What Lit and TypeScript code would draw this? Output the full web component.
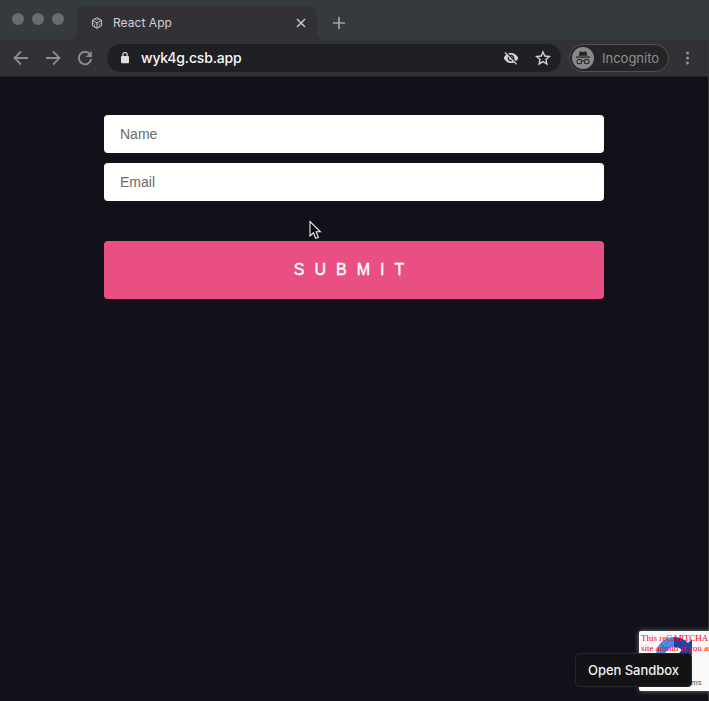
import { LitElement, html, css } from "lit";
import { customElement } from "lit/decorators.js";

@customElement("browser-tabs")
class BrowserTabs extends LitElement {
  static styles = css`
    :host { display: flex; height: 40px; background: #353a3d; font-family: Inter, "Liberation Sans", sans-serif; }
    .lights { display: flex; gap: 8px; padding: 13px 0 0 12px; width: 65px; box-sizing: border-box; }
    .lights i { width: 12px; height: 12px; border-radius: 50%; background: #696b6c; }
    .tab { position: relative; margin: 6px 0 0 12px; width: 240px; height: 34px; box-sizing: border-box; padding: 0 10px 0 13px; display: flex; align-items: center; background: #323135; border-radius: 8px 8px 0 0; color: #d2d2d4; font-size: 12px; }
    .tab::before, .tab::after { content: ""; position: absolute; bottom: 0; width: 8px; height: 8px; }
    .tab::before { left: -8px; background: radial-gradient(circle at 0 0, transparent 7.5px, #323135 8px); }
    .tab::after { right: -8px; background: radial-gradient(circle at 100% 0, transparent 7.5px, #323135 8px); }
    .title { flex: 1; margin: -1px 0 0 8px; white-space: nowrap; letter-spacing: 0.05px; }
    svg { display: block; fill: none; }
    .plus { margin: 16px 0 0 15px; }
  `;
  render() {
    return html`
      <div class="lights"><i></i><i></i><i></i></div>
      <div class="tab">
        <svg width="15" height="14" viewBox="0 0 15 14" stroke="#c9c9cb" stroke-width="1" stroke-linejoin="round">
          <path d="M7 1.7 11.6 4.3V9.7L7 12.3 2.4 9.7V4.3ZM2.4 4.3 7 7 11.6 4.3M7 7V12.3" />
          <path d="M4.7 3 7 4.3 9.3 3M2.4 7 4.7 8.3V11M11.6 7 9.3 8.3V11" stroke-width=".6" />
        </svg>
        <span class="title">React App</span>
        <svg width="12" height="12" viewBox="0 0 12 12" stroke="#c8c9ca" stroke-width="1.5"><path d="M2 2 10 10M10 2 2 10" /></svg>
      </div>
      <svg class="plus" width="14" height="14" viewBox="0 0 14 14" stroke="#a2a5a7" stroke-width="1.7"><path d="M7 1V13M1 7H13" /></svg>
    `;
  }
}

@customElement("browser-toolbar")
class BrowserToolbar extends LitElement {
  static styles = css`
    :host { display: flex; align-items: center; height: 37px; box-sizing: border-box; padding: 0 13px 1px; background: #323135; border-bottom: 1px solid #222126; font-family: Inter, "Liberation Sans", sans-serif; }
    svg { display: block; flex: none; fill: none; }
    .nav { display: flex; gap: 16px; stroke: #8b8c8f; stroke-width: 1.8; }
    .address { display: flex; align-items: center; box-sizing: border-box; width: 454px; height: 28px; margin-left: 14px; padding: 0 10px 0 13px; border-radius: 14px; background: #1f2023; }
    .url { flex: 1; margin-left: 11px; font-size: 14px; font-weight: 500; color: #f6f6f7; white-space: nowrap; letter-spacing: -0.18px; }
    .star { margin-left: 16px; }
    .incognito { display: flex; align-items: center; box-sizing: border-box; width: 100px; height: 28px; margin-left: 8px; padding-left: 2px; border: 1px solid #515054; border-radius: 14px; background: #252528; color: #8d8e91; font-size: 13px; }
    .incognito span { margin-left: 8px; white-space: nowrap; }
    .menu { margin-left: 10px; }
  `;
  render() {
    return html`
      <div class="nav">
        <svg width="16" height="16" viewBox="0 0 16 16"><path d="M15 8H2M8 1.5 1.5 8 8 14.5" /></svg>
        <svg width="16" height="16" viewBox="0 0 16 16"><path d="M1 8H14M8 1.5 14.5 8 8 14.5" /></svg>
        <svg width="16" height="16" viewBox="0 0 16 16"><path d="M13.3 4.7A6.2 6.2 0 1 0 14.2 9" stroke-width="2" /><path d="M14.8 1V7H8.8Z" fill="#8b8c8f" stroke="none" /></svg>
      </div>
      <div class="address">
        <svg width="10" height="14" viewBox="0 0 10 14"><rect x="1" y="5" width="8" height="7.3" rx="1" fill="#dddedf" /><path d="M2.9 5.4V3.6A2.1 2.1 0 0 1 7.1 3.6V5.4" stroke="#dddedf" stroke-width="1.2" /></svg>
        <span class="url">wyk4g.csb.app</span>
        <svg width="16" height="16" viewBox="0 0 24 24">
          <path d="M12 7c2.76 0 5 2.24 5 5 0 .65-.13 1.26-.36 1.83l2.92 2.92c1.51-1.26 2.7-2.89 3.43-4.75-1.73-4.39-6-7.5-11-7.5-1.4 0-2.74.25-3.98.7l2.16 2.16C10.74 7.13 11.35 7 12 7zM2 4.27l2.74 2.74C3.08 8.3 1.78 10.02 1 12c1.73 4.39 6 7.5 11 7.5 1.55 0 3.03-.3 4.38-.84L19.73 22 21 20.73 3.27 3 2 4.27zM7.53 9.8l1.55 1.55c-.05.21-.08.43-.08.65 0 1.66 1.34 3 3 3 .22 0 .44-.03.65-.08l1.55 1.55c-.67.33-1.41.53-2.2.53-2.76 0-5-2.24-5-5 0-.79.2-1.53.53-2.2zm4.31-.78l3.15 3.15.02-.16c0-1.66-1.34-3-3-3z" fill="#d1d2d4" />
        </svg>
        <svg class="star" width="16" height="16" viewBox="0 0 24 24"><path d="M12 3 14.7 9.1 21.5 9.8 16.4 14.3 17.9 21 12 17.5 6.1 21 7.6 14.3 2.5 9.8 9.3 9.1Z" stroke="#d1d2d4" stroke-width="2.1" /></svg>
      </div>
      <div class="incognito">
        <svg width="22" height="22" viewBox="0 0 22 22">
          <circle cx="11" cy="11" r="11" fill="#88898b" />
          <path d="M6.6 8.7 7.7 4.8Q8 4.1 8.8 4.4L11 5 13.2 4.4Q14 4.1 14.3 4.8L15.4 8.7ZM4 9.5H18V10.7H4Z" fill="#252528" />
          <g stroke="#252528" stroke-width="1.1"><rect x="5" y="12.5" width="4.6" height="4.2" rx="1.7" /><rect x="12.4" y="12.5" width="4.6" height="4.2" rx="1.7" /><path d="M9.5 14.2Q11 13.2 12.5 14.2" /></g>
        </svg>
        <span>Incognito</span>
      </div>
      <svg class="menu" width="16" height="16" viewBox="0 0 16 16"><g fill="#929396"><circle cx="8.5" cy="3" r="1.5" /><circle cx="8.5" cy="8" r="1.5" /><circle cx="8.5" cy="13" r="1.5" /></g></svg>
    `;
  }
}

@customElement("signup-form")
class SignupForm extends LitElement {
  static styles = css`
    :host { display: flex; flex-direction: column; width: 500px; margin: 38px 0 0 104px; font-family: "Liberation Sans", Arial, sans-serif; }
    input { box-sizing: border-box; height: 38px; margin: 0 0 10px; padding: 0 16px; border: 0; border-radius: 4px; background: #fff; font: 14px "Liberation Sans", Arial, sans-serif; }
    input::placeholder { color: #6b6b6b; opacity: 1; }
    button { height: 58px; margin: 30px 0 0; padding: 0; border: 0; border-radius: 4px; background: #ea4f84; color: #fff; font: 500 16px/58px "Liberation Sans", Arial, sans-serif; letter-spacing: 10px; -webkit-text-stroke: 0.4px #fff; }
  `;
  render() {
    return html`<input placeholder="Name" /><input placeholder="Email" /><button>SUBMIT</button>`;
  }
}

@customElement("app-root")
class AppRoot extends LitElement {
  static styles = css`
    :host { display: block; position: relative; width: 709px; height: 701px; overflow: hidden; background: #11111a; }
    .cursor { position: absolute; left: 308px; top: 220px; }
    .badge { position: absolute; left: 639px; top: 631px; width: 256px; height: 60px; border-radius: 2px; background: #f9f9f9; box-shadow: 0 0 5px #77777c; }
    .logo { position: absolute; left: 16px; top: 5px; }
    .error { position: absolute; left: 2px; top: 2px; color: #f00; font: 9px/10px "Liberation Serif", "Times New Roman", serif; white-space: nowrap; }
    .terms { position: absolute; left: 41px; top: 47px; color: #555; font: 8px/10px "Liberation Sans", Arial, sans-serif; }
    .sandbox { position: absolute; left: 575px; top: 653px; width: 117px; height: 34px; box-sizing: border-box; border: 1px solid #27272b; border-radius: 4px; background: #131316; color: #f1f1f2; text-align: center; font: 500 13px/33px Inter, "Liberation Sans", sans-serif; letter-spacing: -0.05px; white-space: nowrap; }
    .edge { position: absolute; right: 0; top: 40px; width: 1px; height: 661px; background: #36363c; }
  `;
  render() {
    return html`
      <browser-tabs></browser-tabs>
      <browser-toolbar></browser-toolbar>
      <signup-form></signup-form>
      <svg class="cursor" width="15" height="21" viewBox="0 0 15 21"><path d="M2 1.5V16L5.4 12.8 7.7 18.3 10.4 17.2 8.1 11.8H12.4Z" fill="#08080a" stroke="#eee" stroke-width="1.1" /></svg>
      <div class="edge"></div>
      <div class="badge">
        <svg class="logo" width="40" height="40" viewBox="0 0 40 40">
          <path d="M1 19A18 18 0 0 1 19 1V11Q15 11 13 14L8 19Z" fill="#4a87ef" />
          <path d="M19 1Q28 1 33 7L37 3V19H22L27 14Q24 11 19 11Z" fill="#2340a5" />
          <path d="M1 19H10Q10 27 19 28Q24 28 27 24L33 30Q28 36 19 37Q10 37 5 30L1 34Z" fill="#ababab" />
        </svg>
        <div class="error">This reCAPTCHA<br />site admin if you are</div>
        <div class="terms">Terms</div>
      </div>
      <div class="sandbox">Open Sandbox</div>
    `;
  }
}
